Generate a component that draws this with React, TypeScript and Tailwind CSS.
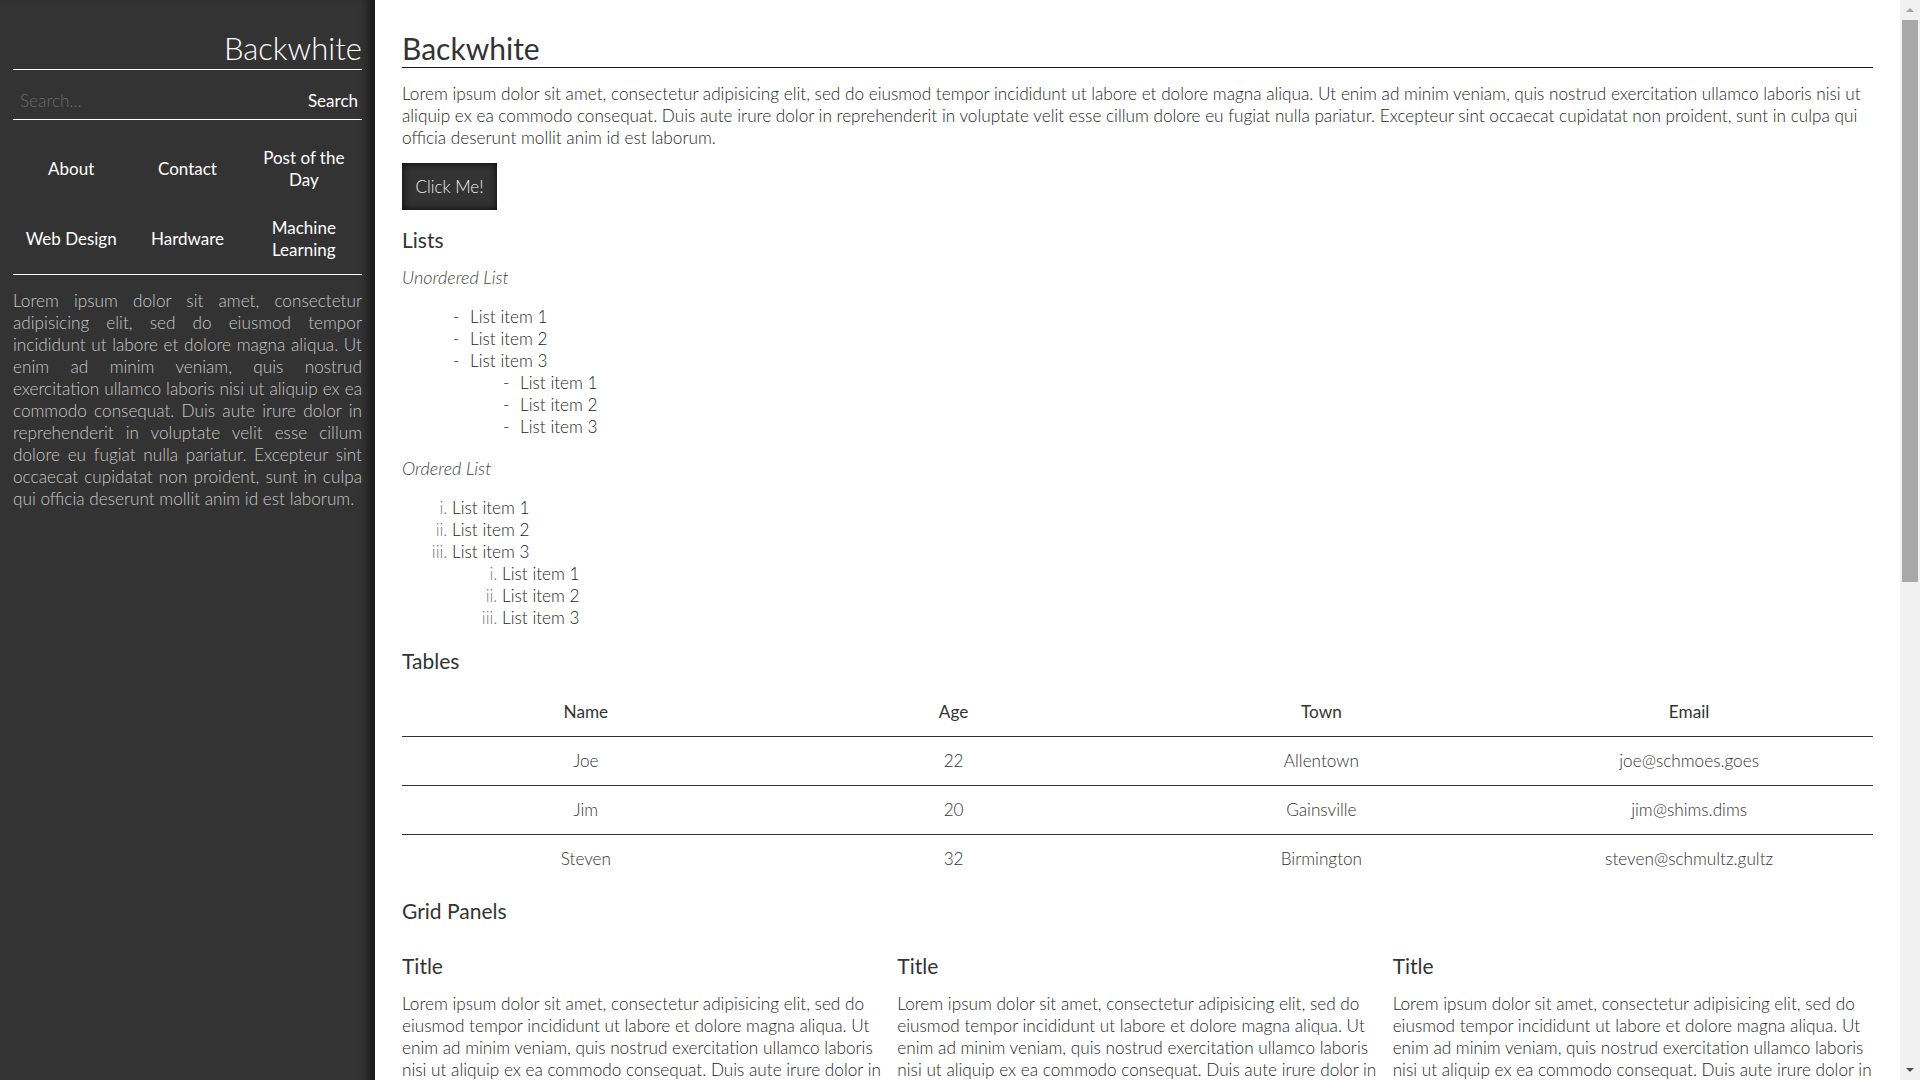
import React from "react";

const LOREM =
  "Lorem ipsum dolor sit amet, consectetur adipisicing elit, sed do eiusmod tempor incididunt ut labore et dolore magna aliqua. Ut enim ad minim veniam, quis nostrud exercitation ullamco laboris nisi ut aliquip ex ea commodo consequat. Duis aute irure dolor in reprehenderit in voluptate velit esse cillum dolore eu fugiat nulla pariatur. Excepteur sint occaecat cupidatat non proident, sunt in culpa qui officia deserunt mollit anim id est laborum.";

const navItems = ["About", "Contact", "Post of the Day", "Web Design", "Hardware", "Machine Learning"];

const rows = [
  ["Joe", "22", "Allentown", "joe@schmoes.goes"],
  ["Jim", "20", "Gainsville", "jim@shims.dims"],
  ["Steven", "32", "Birmington", "steven@schmultz.gultz"],
];

function Sidebar() {
  return (
    <aside className="w-[375px] shrink-0 bg-[#333333] px-[13px] min-h-screen shadow-[inset_-12px_0_10px_-6px_rgba(0,0,0,0.55)]">
      <div className="sticky top-0">
        <h1 className="mt-[30px] pb-[2px] text-right text-[31px] leading-[37px] font-light text-white border-b border-white">
          Backwhite
        </h1>
        <form
          className="flex items-center pt-[20px] pb-[7px] border-b border-white"
          onSubmit={(e) => e.preventDefault()}
        >
          <input
            type="text"
            placeholder="Search..."
            className="flex-1 min-w-0 bg-transparent pl-[7px] text-[17.2px] leading-[22px] font-light text-white placeholder:text-[#6a6a6a] outline-none"
          />
          <button type="submit" className="pr-[4px] text-[17px] leading-[22px] text-white">
            Search
          </button>
        </form>
        <nav className="grid grid-cols-3 pt-[14px] border-b border-white">
          {navItems.map((n) => (
            <a
              key={n}
              className="flex items-center justify-center px-[10px] py-[13px] min-h-[70px] text-center text-[17px] leading-[22px] text-white"
            >
              {n}
            </a>
          ))}
        </nav>
        <p className="mt-[15px] text-justify text-[17.2px] leading-[22px] font-light text-[#c8c8c8]">{LOREM}</p>
      </div>
    </aside>
  );
}

function Scrollbar() {
  return (
    <div className="w-[20px] shrink-0">
      <div className="sticky top-0 h-screen bg-[#f1f1f1] flex flex-col items-center">
        <div className="h-[20px] flex items-center justify-center">
          <div className="w-0 h-0 border-l-[4px] border-r-[4px] border-b-[4px] border-l-transparent border-r-transparent border-b-[#a3a3a3]" />
        </div>
        <div className="w-[16px] h-[562px] bg-[#a8a8a8]" />
        <div className="flex-1" />
        <div className="h-[20px] flex items-center justify-center">
          <div className="w-0 h-0 border-l-[4px] border-r-[4px] border-t-[4px] border-l-transparent border-r-transparent border-t-[#505050]" />
        </div>
      </div>
    </div>
  );
}

function Main() {
  const body = "text-[17.2px] leading-[22px] font-light text-[#262626]";
  return (
    <main className="flex-1 min-w-0 px-[27px] pt-[30px] pb-[60px] text-[#333333]">
      <h1 className="text-[30px] leading-[37px] font-normal text-[#333] border-b border-[#1a1a1a]">Backwhite</h1>
      <p className={`mt-[15px] ${body}`}>{LOREM}</p>
      <button className="mt-[14px] h-[47px] w-[95px] bg-[#333] text-[17px] font-light text-[#f0f0f0] shadow-[inset_0_0_9px_rgba(0,0,0,0.85)]">
        Click Me!
      </button>

      <h2 className="mt-[15px] text-[21px] leading-[30px] font-normal text-[#333]">Lists</h2>
      <p className="mt-[11px] text-[18px] leading-[22px] italic font-light text-[#444]">Unordered List</p>
      <ul className={`mt-[18px] ${body}`}>
        {["List item 1", "List item 2", "List item 3"].map((t) => (
          <li key={t} className="flex pl-[51px]">
            <span className="w-[17px]">-</span>
            <span>{t}</span>
          </li>
        ))}
        <li>
          <ul>
            {["List item 1", "List item 2", "List item 3"].map((t) => (
              <li key={t} className="flex pl-[101px]">
                <span className="w-[17px]">-</span>
                <span>{t}</span>
              </li>
            ))}
          </ul>
        </li>
      </ul>

      <p className="mt-[19px] text-[18px] leading-[22px] italic font-light text-[#444]">Ordered List</p>
      <ol className={`mt-[18px] pl-[50px] list-[lower-roman] marker:text-[#777] ${body}`}>
        <li>List item 1</li>
        <li>List item 2</li>
        <li>
          List item 3
          <ol className="pl-[50px] list-[lower-roman] marker:text-[#777]">
            <li>List item 1</li>
            <li>List item 2</li>
            <li>List item 3</li>
          </ol>
        </li>
      </ol>

      <h2 className="mt-[17px] text-[21px] leading-[30px] font-normal text-[#333]">Tables</h2>
      <table className="mt-[12px] w-full table-fixed border-collapse text-[17.2px]">
        <thead>
          <tr className="border-b border-[#333]">
            {["Name", "Age", "Town", "Email"].map((h) => (
              <th key={h} className="h-[48px] font-normal text-[#333] text-center">
                {h}
              </th>
            ))}
          </tr>
        </thead>
        <tbody>
          {rows.map((r, i) => (
            <tr key={i} className={i < rows.length - 1 ? "border-b border-[#333]" : ""}>
              {r.map((c, j) => (
                <td key={j} className="h-[49px] text-center font-light text-[#333]">
                  {c}
                </td>
              ))}
            </tr>
          ))}
        </tbody>
      </table>

      <h2 className="mt-[13px] text-[21px] leading-[30px] font-normal text-[#333]">Grid Panels</h2>
      <div className="mt-[25px] grid grid-cols-3 gap-[15px]">
        {[0, 1, 2].map((i) => (
          <div key={i}>
            <h3 className="text-[21px] leading-[30px] font-normal text-[#333]">Title</h3>
            <p className={`mt-[12px] ${body}`}>{LOREM}</p>
          </div>
        ))}
      </div>
    </main>
  );
}

export default function App() {
  return (
    <div className="flex min-h-screen bg-white" style={{ fontFamily: "Lato, 'Open Sans', sans-serif" }}>
      <Sidebar />
      <Main />
      <Scrollbar />
    </div>
  );
}
